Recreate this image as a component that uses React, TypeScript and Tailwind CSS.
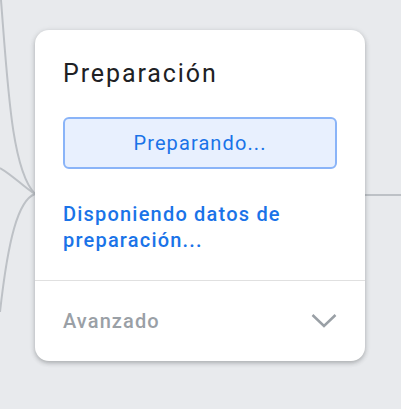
export default function App() {
  return (
    <div className="relative w-[401px] h-[409px] overflow-hidden bg-[#e8eaed] font-['Roboto',sans-serif]">
      {/* edges */}
      <svg className="absolute inset-0" width="401" height="409" fill="none" stroke="#bdc1c6" strokeWidth="2">
        <path d="M1 0 C 8 90, 12 170, 35 194" />
        <path d="M0 168 C 14 176, 22 186, 35 194" />
        <path d="M35 194 C 18 200, 8 240, 0 312" />
        <path d="M365 195 L 401 195" />
      </svg>

      <div className="relative pt-[30px] pl-[35px]">
        <div className="w-[330px] h-[331px] bg-white rounded-[14px] shadow-[0_2px_4px_rgba(60,64,67,0.3),0_1px_6px_rgba(60,64,67,0.1)] flex flex-col">
          <div className="px-[28px] pt-[28px]">
            <h2 className="text-[25px] leading-[32px] tracking-[1.9px] text-[#202124]">Preparación</h2>
            <div className="mt-[27px] h-[52px] rounded-[6px] border-2 border-[#8ab4f8] bg-[#e8f0fe] flex items-center justify-center text-[20px] tracking-[1.1px] text-[#1a73e8]">
              Preparando...
            </div>
            <p className="mt-[32px] text-[20px] leading-[26px] tracking-[1.2px] text-[#1a73e8] font-medium">
              Disponiendo datos de
              <br />
              preparación...
            </p>
          </div>
          <div className="mt-[27px] h-px bg-[#e0e0e0]" />
          <div className="flex-1 flex items-center justify-between px-[28px]">
            <span className="text-[20px] tracking-[1.1px] text-[#9aa0a6] font-medium">Avanzado</span>
            <svg width="26" height="16" viewBox="0 0 26 16" fill="none" stroke="#9aa0a6" strokeWidth="2.5">
              <path d="M1.5 2 L13 13 L24.5 2" />
            </svg>
          </div>
        </div>
      </div>
    </div>
  );
}
